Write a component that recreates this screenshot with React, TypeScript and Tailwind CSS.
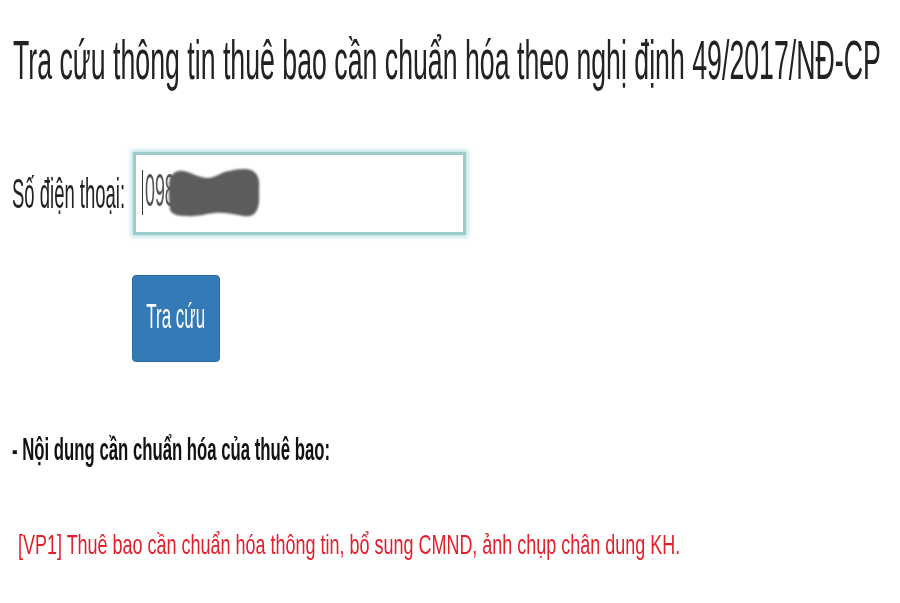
import React from "react";

export default function App() {
  return (
    <div
      className="w-[900px] h-[603px] bg-white overflow-hidden relative flex flex-col"
      style={{ fontFamily: '"Liberation Sans", Arial, sans-serif' }}
    >
      {/* Title */}
      <div className="mt-[32px] pl-[13px] h-[56px]">
        <div className="origin-left scale-x-[0.477] whitespace-nowrap text-[56px] leading-none text-[#222]">
          Tra cứu thông tin thuê bao cần chuẩn hóa theo nghị định 49/2017/NĐ-CP
        </div>
      </div>

      {/* Phone row */}
      <div className="mt-[64px] pl-[12px] flex items-center h-[83px]">
        <div className="w-[121px] shrink-0">
          <div className="origin-left scale-x-[0.43] whitespace-nowrap text-[43px] leading-none text-[#222]">
            Số điện thoại:
          </div>
        </div>
        <div className="relative w-[333px] h-[83px] shrink-0 bg-white border-[3px] border-[#9ccbcb] shadow-[0_0_4px_2px_rgba(160,215,215,0.7)] flex items-center">
          <div className="absolute left-[6px] top-[15px] w-[1px] h-[45px] bg-[#333]" />
          <div className="pl-[9px] pb-[8px] w-[200px]">
            <div className="origin-left scale-x-[0.38] whitespace-nowrap text-[47px] leading-none text-[#555]">
              098
            </div>
          </div>
          <svg
            className="absolute left-[32px] top-[12px]"
            width="94"
            height="54"
            viewBox="-1 -1 94 54"
          >
            <defs>
              <filter id="bl" x="-10%" y="-10%" width="120%" height="120%">
                <feGaussianBlur stdDeviation="1.2" />
              </filter>
            </defs>
            <path
              d="M1 10 C4 4 9 2 14 3 C22 4 30 10 39 10 C46 10 52 4 60 3 C68 1 76 0 82 2 C89 5 91 12 90 20 C90 28 91 36 88 42 C85 48 80 49 74 48 C64 46 54 44 45 45 C36 46 28 49 18 48 C10 48 3 47 1 42 C0 32 -1 18 1 10 Z"
              fill="#5b5b5b"
              filter="url(#bl)"
            />
          </svg>
        </div>
      </div>

      {/* Button */}
      <div className="mt-[40px] pl-[132px]">
        <div className="w-[88px] h-[87px] bg-[#337ab7] border border-[#2e6da4] rounded-[4px] flex items-center justify-center pb-[7px] overflow-hidden">
          <div className="origin-center scale-x-[0.485] whitespace-nowrap text-[35px] leading-none text-white">
            Tra cứu
          </div>
        </div>
      </div>

      {/* Heading */}
      <div className="mt-[72px] pl-[12px] h-[31px]">
        <div className="origin-left scale-x-[0.54] whitespace-nowrap text-[31px] leading-none font-bold text-[#111]">
          - Nội dung cần chuẩn hóa của thuê bao:
        </div>
      </div>

      {/* Red note */}
      <div className="mt-[66px] pl-[18px] h-[28px]">
        <div className="origin-left scale-x-[0.642] whitespace-nowrap text-[28px] leading-none text-[#e2202a]">
          [VP1] Thuê bao cần chuẩn hóa thông tin, bổ sung CMND, ảnh chụp chân dung KH.
        </div>
      </div>
    </div>
  );
}
